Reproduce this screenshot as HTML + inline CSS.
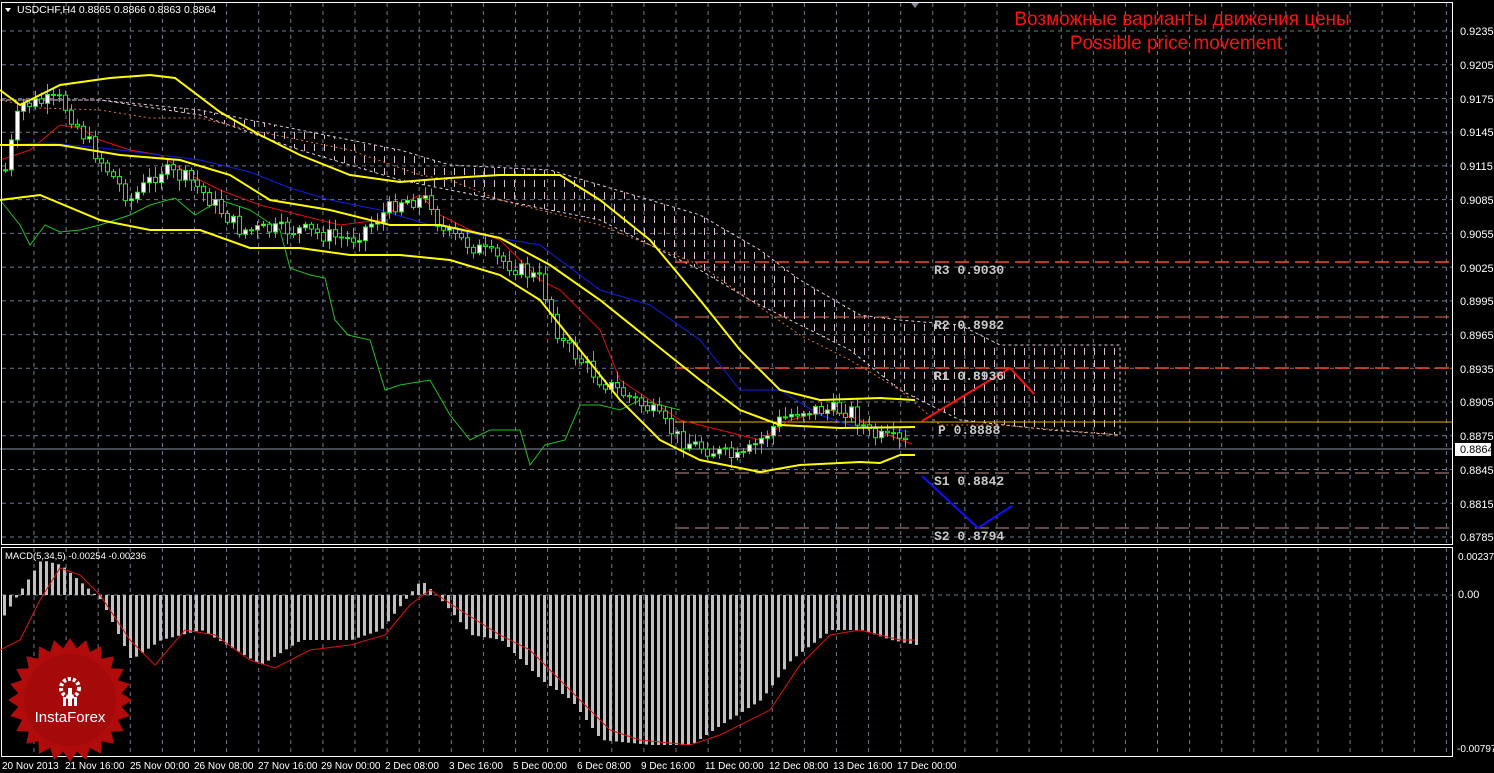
<!DOCTYPE html>
<html><head><meta charset="utf-8"><style>
html,body{margin:0;padding:0;background:#000;}
svg{display:block;}
text{font-family:"Liberation Sans",sans-serif;}
.ax{fill:#fff;font-size:10px;}
.lv{fill:#c8c8c8;font-family:"Liberation Mono",monospace;font-size:13px;font-weight:bold;}
</style></head><body>
<svg id="s" width="1494" height="773" xmlns="http://www.w3.org/2000/svg">
<rect width="1494" height="773" fill="#000"/>
<g id="grid" stroke="#6d7b8d" stroke-dasharray="4,4" stroke-width="1"></g>
<defs>
<pattern id="cp" width="10" height="12" patternUnits="userSpaceOnUse">
<line x1="4.5" y1="0" x2="4.5" y2="7" stroke="#d8c0d0" stroke-width="1"/>
</pattern>
</defs>
<polygon fill="url(#cp)" stroke="#e0c8d8" stroke-dasharray="3,3" points="0,100 100,100 200,110 300,130 400,150 450,165 550,170 600,185 700,215 760,250 800,280 860,315 900,320 960,325 1000,345 1120,345 1120,435 1050,430 960,420 900,390 850,350 750,300 700,270 600,220 500,200 400,180 300,150 200,115 100,100"/>
<polyline fill="none" stroke="#e07030" stroke-dasharray="2,3" points="0,100 40,108 100,110 150,118 200,118 250,130 300,140 350,150 420,175 450,180 500,200 600,225 700,265 750,300 800,335 850,360 900,390 940,425 1000,425 1060,430 1120,435"/>
<line x1="675" y1="262" x2="1453" y2="262" stroke="#f05020" stroke-width="1.5" stroke-dasharray="14,6"/>
<line x1="675" y1="317" x2="1453" y2="317" stroke="#e07050" stroke-width="1" stroke-dasharray="14,6"/>
<line x1="675" y1="368" x2="1453" y2="368" stroke="#f05020" stroke-width="1.5" stroke-dasharray="14,6"/>
<line x1="675" y1="422" x2="1453" y2="422" stroke="#e8b000" stroke-width="1"/>
<line x1="0" y1="449" x2="1453" y2="449" stroke="#8a95a5" stroke-width="1"/>
<line x1="675" y1="473" x2="1453" y2="473" stroke="#c09090" stroke-width="1" stroke-dasharray="14,6"/>
<line x1="675" y1="528" x2="1453" y2="528" stroke="#c09090" stroke-width="1" stroke-dasharray="14,6"/>
<polyline fill="none" stroke="#20c020" stroke-width="1" points="0,200 20,225 30,245 45,225 60,232 80,230 100,225 130,215 150,205 175,198 195,215 220,200 250,210 280,230 290,268 310,275 325,278 335,320 348,335 370,340 385,390 400,385 430,380 450,415 470,440 490,430 520,430 530,465 545,445 565,440 580,405 600,405 620,410 640,400 660,405 680,410"/>
<polyline fill="none" stroke="#e01010" stroke-width="1" points="0,160 30,150 60,125 80,128 100,140 130,150 160,155 190,175 220,190 260,205 300,215 340,225 380,220 400,205 420,195 440,215 470,230 500,240 520,260 540,280 560,290 580,310 600,330 620,380 650,400 680,420 720,430 760,440 790,420 830,410 860,420 880,432 912,444"/>
<polyline fill="none" stroke="#1020e0" stroke-width="1" points="0,145 50,143 120,150 200,160 250,172 290,188 330,200 380,210 430,225 480,235 540,245 600,290 650,305 700,340 740,390 780,390 820,415 850,425 880,427 910,432"/>
<g id="cdl"></g>
<polyline fill="none" stroke="#ffff00" stroke-width="2" points="0,90 20,105 60,85 110,78 150,75 175,78 220,112 260,135 300,155 350,175 400,182 450,178 500,175 560,175 600,200 650,240 700,300 740,350 780,390 820,400 880,398 915,400"/>
<polyline fill="none" stroke="#ffff00" stroke-width="2" points="0,145 60,145 120,155 180,160 230,175 270,200 330,210 390,225 440,225 500,238 550,265 600,300 650,340 700,380 740,410 780,425 840,428 915,427"/>
<polyline fill="none" stroke="#ffff00" stroke-width="2" points="0,200 40,195 100,220 150,230 200,230 250,248 300,248 350,255 400,255 450,260 500,275 540,300 580,350 620,400 660,440 700,460 760,472 800,465 860,462 880,463 900,455 915,455"/>
<polyline fill="none" stroke="#ff1010" stroke-width="2" points="922,421 1010,368 1034,394"/>
<polyline fill="none" stroke="#1010ff" stroke-width="2" points="922,476 978,528 1012,506"/>
<text class="lv" x="934" y="274">R3 0.9030</text>
<text class="lv" x="934" y="329">R2 0.8982</text>
<text class="lv" x="934" y="380">R1 0.8936</text>
<text class="lv" x="938" y="434">P 0.8888</text>
<text class="lv" x="934" y="485">S1 0.8842</text>
<text class="lv" x="934" y="540">S2 0.8794</text>
<text x="1182" y="25" fill="#ff1010" font-size="19" text-anchor="middle">Возможные варианты движения цены</text>
<text x="1176" y="49" fill="#ff1010" font-size="19" text-anchor="middle">Possible price movement</text>
<rect x="1.5" y="2.5" width="1451" height="542" fill="none" stroke="#fff" stroke-width="1"/>
<rect x="1.5" y="547.5" width="1451" height="209" fill="none" stroke="#fff" stroke-width="1"/>
<polygon points="5,8 11,8 8,12" fill="#fff"/>
<text x="17" y="13" fill="#fff" font-size="10.5">USDCHF,H4  0.8865 0.8866 0.8863 0.8864</text>
<polygon points="911,3 919,3 915,8" fill="#889"/>
<g id="hist"></g>
<polyline fill="none" stroke="#e01010" stroke-width="1" points="0,650 20,640 40,600 60,568 80,575 100,595 130,640 155,665 185,630 215,635 250,660 275,668 310,650 350,645 385,635 410,605 430,590 460,610 500,635 530,650 570,690 610,730 640,740 690,745 720,735 770,710 800,665 830,635 860,630 900,640 915,640"/>
<text x="5" y="559" fill="#fff" font-size="9.5">MACD(5,34,5) -0.00254 -0.00236</text>
<g transform="translate(70,700)">
<polygon id="star" fill="#b00c0c"/>
<circle r="46" fill="#a40a0a"/>
<circle cx="0" cy="-12" r="9" fill="none" stroke="#fff" stroke-width="4" stroke-dasharray="3,2"/>
<rect x="-2" y="-12" width="4" height="18" fill="#fff"/>
<rect x="-7" y="-3" width="3" height="9" fill="#fff"/><rect x="4" y="-3" width="3" height="9" fill="#fff"/>
<text x="0" y="22" fill="#fff" font-size="15" text-anchor="middle">InstaForex</text>
</g>
<g class="ax" style="font-size:11px">
<text x="1460" y="35">0.9235</text><text x="1460" y="69">0.9205</text><text x="1460" y="103">0.9175</text><text x="1460" y="136">0.9145</text>
<text x="1460" y="170">0.9115</text><text x="1460" y="204">0.9085</text><text x="1460" y="238">0.9055</text><text x="1460" y="272">0.9025</text>
<text x="1460" y="305">0.8995</text><text x="1460" y="339">0.8965</text><text x="1460" y="373">0.8935</text><text x="1460" y="406">0.8905</text>
<text x="1460" y="440">0.8875</text><text x="1460" y="474">0.8845</text><text x="1460" y="508">0.8815</text><text x="1460" y="541">0.8785</text>
<text x="1458" y="560" style="font-size:10px">0.00237</text><text x="1458" y="598">0.00</text><text x="1457" y="752" style="font-size:10px">-0.00797</text>
</g>
<rect x="1455" y="443" width="36" height="13" fill="#fff"/>
<text x="1460" y="453" fill="#000" font-size="11">0.8864</text>
<g class="ax">
<text x="2" y="769">20 Nov 2013</text><text x="65" y="769">21 Nov 16:00</text><text x="130" y="769">25 Nov 00:00</text>
<text x="194" y="769">26 Nov 08:00</text><text x="258" y="769">27 Nov 16:00</text><text x="321" y="769">29 Nov 00:00</text>
<text x="385" y="769">2 Dec 08:00</text><text x="449" y="769">3 Dec 16:00</text><text x="513" y="769">5 Dec 00:00</text>
<text x="577" y="769">6 Dec 08:00</text><text x="641" y="769">9 Dec 16:00</text><text x="705" y="769">11 Dec 00:00</text>
<text x="769" y="769">12 Dec 08:00</text><text x="833" y="769">13 Dec 16:00</text><text x="897" y="769">17 Dec 00:00</text>
</g>
</svg>
<script>
(function(){
var NS="http://www.w3.org/2000/svg";
function el(p,t,a){var e=document.createElementNS(NS,t);for(var k in a)e.setAttribute(k,a[k]);p.appendChild(e);return e;}
var g=document.getElementById('grid');
for(var gx=34;gx<1453;gx+=32.1){el(g,'line',{x1:gx,y1:3,x2:gx,y2:544});el(g,'line',{x1:gx,y1:548,x2:gx,y2:756});}
for(var i=0;i<16;i++){var gy=31+i*33.73;el(g,'line',{x1:2,y1:gy,x2:1452,y2:gy});}
el(g,'line',{x1:2,y1:595,x2:1452,y2:595});
function interp(pts,x){if(x<=pts[0][0])return pts[0][1];for(var i=0;i<pts.length-1;i++){if(x>=pts[i][0]&&x<=pts[i+1][0]){var t=(x-pts[i][0])/(pts[i+1][0]-pts[i][0]);return pts[i][1]+t*(pts[i+1][1]-pts[i][1]);}}return pts[pts.length-1][1];}
var P=[[5,170],[20,105],[60,100],[100,160],[130,200],[160,170],[190,180],[240,230],[300,230],[350,240],[400,200],[430,200],[440,230],[500,260],[540,280],[560,340],[600,380],[650,410],[680,440],[740,460],[780,420],[800,410],[850,410],[870,435],[910,445]];
var c=document.getElementById('cdl');var seed=7;function r(){seed=(seed*9301+49297)%233280;return seed/233280;}
var prev=interp(P,5);
for(var cx=5;cx<=910;cx+=6){var cl=interp(P,cx)+(r()-0.5)*16;var o=prev;var hi=Math.min(o,cl)-2-r()*9,lo=Math.max(o,cl)+2+r()*9;
el(c,'line',{x1:cx+0.5,y1:hi,x2:cx+0.5,y2:lo,stroke:'#00ff00','stroke-width':1});
var tp=Math.min(o,cl),h=Math.max(1,Math.abs(o-cl));
el(c,'rect',{x:cx-1.5,y:tp,width:4,height:h,fill:(cl<o?'#fff':'#000'),stroke:'#00ff00','stroke-width':1});
prev=cl;}
var H=[[0,620],[40,560],[60,565],[100,600],[130,660],[160,640],[200,630],[260,665],[300,640],[350,640],[380,630],[420,580],[440,600],[470,635],[500,640],[540,680],[570,700],[600,740],[650,745],[690,745],[720,725],[760,700],[790,660],[830,630],[860,630],[890,640],[915,645]];
var hg=document.getElementById('hist');
for(var hx=3;hx<=915;hx+=6){var hy=interp(H,hx);el(hg,'rect',{x:hx,y:Math.min(hy,595),width:3,height:Math.abs(hy-595),fill:'#c0c0c0'});}
var s=[];for(var j=0;j<48;j++){var a=j*Math.PI/24,rr=j%2?52:62;s.push((rr*Math.sin(a)).toFixed(1)+','+(-rr*Math.cos(a)).toFixed(1));}
document.getElementById('star').setAttribute('points',s.join(' '));
})();
</script>
</body></html>
